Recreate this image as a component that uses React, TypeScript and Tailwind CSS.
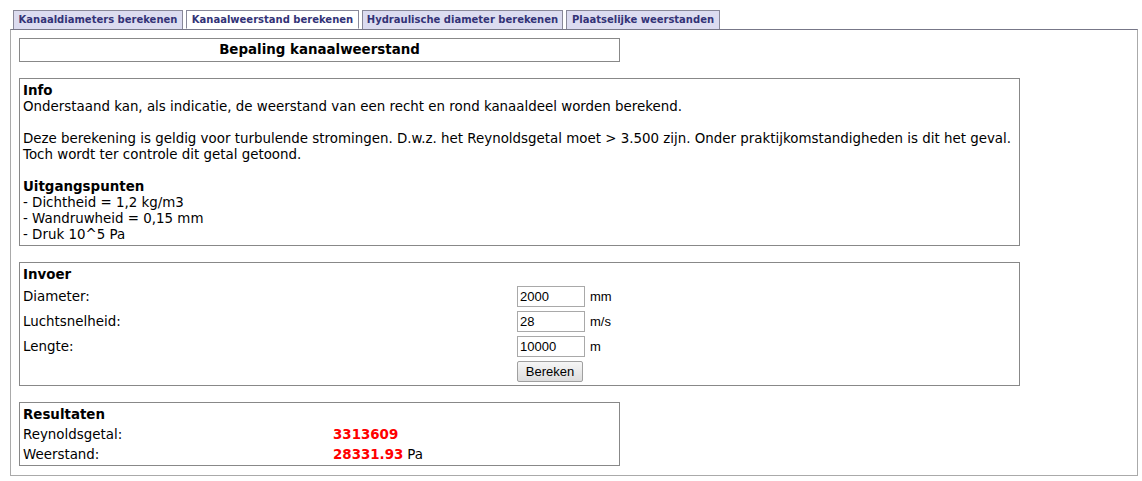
import React from "react";

const tabs = [
  { label: "Kanaaldiameters berekenen", w: "w-[170px]", active: false },
  { label: "Kanaalweerstand berekenen", w: "w-[173px]", active: true },
  { label: "Hydraulische diameter berekenen", w: "w-[201px]", active: false },
  { label: "Plaatselijke weerstanden", w: "w-[154px]", active: false },
];

const inputs = [
  { label: "Diameter:", value: "2000", unit: "mm" },
  { label: "Luchtsnelheid:", value: "28", unit: "m/s" },
  { label: "Lengte:", value: "10000", unit: "m" },
];

export default function App() {
  return (
    <div className="min-h-[481px] bg-white px-[10px] pt-[10px] text-[13.4px] leading-[16px] text-black font-['DejaVu_Sans',Verdana,sans-serif]">
      <div className="flex gap-[3px] pl-[3px]">
        {tabs.map((t) => (
          <div
            key={t.label}
            className={`${t.w} shrink-0 h-[19px] flex items-center justify-center border border-[#888899] text-[10px] font-bold text-[#333377] whitespace-nowrap ${
              t.active ? "bg-white border-b-white -mb-px relative z-10" : "bg-[#dcdcf0] border-b-0"
            }`}
          >
            {t.label}
          </div>
        ))}
      </div>

      <div className="w-[1128px] h-[447px] border border-[#aaaaaa] border-t-[#777788] px-[8px] pt-[8px]">
        <div className="w-[601px] h-[24px] border border-[#888888] flex items-center justify-center font-bold">
          Bepaling kanaalweerstand
        </div>

        <div className="mt-[16px] w-[1001px] border border-[#888888] px-[3px] pt-[4px] pb-[2px]">
          <div className="font-bold">Info</div>
          <div>Onderstaand kan, als indicatie, de weerstand van een recht en rond kanaaldeel worden berekend.</div>
          <div className="h-[16px]" />
          <div>
            Deze berekening is geldig voor turbulende stromingen. D.w.z. het Reynoldsgetal moet &gt; 3.500 zijn. Onder praktijkomstandigheden is dit het geval.
          </div>
          <div>Toch wordt ter controle dit getal getoond.</div>
          <div className="h-[16px]" />
          <div className="font-bold">Uitgangspunten</div>
          <div>- Dichtheid = 1,2 kg/m3</div>
          <div>- Wandruwheid = 0,15 mm</div>
          <div>- Druk 10^5 Pa</div>
        </div>

        <div className="mt-[16px] w-[1001px] h-[124px] border border-[#888888] px-[3px] pt-[4px]">
          <div className="font-bold">Invoer</div>
          <div className="mt-[1px] flex flex-col">
            {inputs.map((r) => (
              <div key={r.label} className="flex items-center h-[25px]">
                <div className="w-[494px]">{r.label}</div>
                <input
                  readOnly
                  value={r.value}
                  className="w-[68px] h-[21px] border border-[#a9a9a9] px-[2px] text-[13px] font-['Liberation_Sans',Arial,sans-serif] outline-none"
                />
                <span className="ml-[5px] text-[13px] font-['Liberation_Sans',Arial,sans-serif]">{r.unit}</span>
              </div>
            ))}
            <div className="flex items-center h-[25px]">
              <div className="w-[494px]" />
              <button className="w-[66px] h-[21px] border border-[#a0a0a0] rounded-[2px] bg-gradient-to-b from-[#f6f6f6] to-[#dddddd] text-[13px] font-['Liberation_Sans',Arial,sans-serif] leading-none">
                Bereken
              </button>
            </div>
          </div>
        </div>

        <div className="mt-[16px] w-[601px] h-[64px] border border-[#888888] px-[3px] pt-[4px]">
          <div className="font-bold">Resultaten</div>
          <div className="mt-[2px] flex items-center h-[20px]">
            <div className="w-[310px]">Reynoldsgetal:</div>
            <span className="font-bold text-[#ff0000]">3313609</span>
          </div>
          <div className="flex items-center h-[20px]">
            <div className="w-[310px]">Weerstand:</div>
            <span className="font-bold text-[#ff0000]">28331.93</span>
            <span className="ml-[4px]">Pa</span>
          </div>
        </div>
      </div>
    </div>
  );
}
